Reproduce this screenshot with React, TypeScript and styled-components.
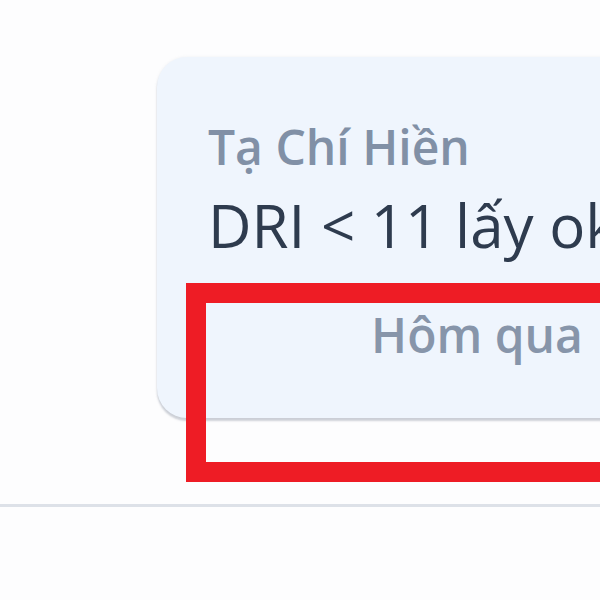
import React from "react";
import styled, { createGlobalStyle } from "styled-components";

const Global = createGlobalStyle`
  html, body { margin: 0; padding: 0; background: #fdfdfe; }
  body { font-family: "Open Sans", "Noto Sans", sans-serif; }
`;

const Page = styled.div`
  width: 600px;
  height: 600px;
  overflow: hidden;
  position: relative;
  background: #fdfdfe;
  display: flex;
  flex-direction: column;
  padding-top: 57px;
  box-sizing: border-box;
`;

const MessageRow = styled.div`
  display: flex;
  padding-left: 157px;
  height: 425px;
`;

const BubbleWrap = styled.div`
  position: relative;
  flex: 0 0 auto;
`;

const Bubble = styled.div`
  width: 640px;
  box-sizing: border-box;
  background: #eff5fd;
  border-radius: 30px;
  padding: 62px 51px 0 51px;
  height: 361px;
  box-shadow: 0 3px 2px rgba(120, 130, 145, 0.35), 0 0 3px rgba(150, 160, 175, 0.15);
  display: flex;
  flex-direction: column;
`;

const Sender = styled.div`
  font-size: 48px;
  line-height: 60px;
  color: #8190a6;
  font-weight: 600;
  white-space: nowrap;
  margin-top: -2px;
`;

const Body = styled.div`
  font-size: 60px;
  line-height: 74px;
  color: #2e3b4e;
  font-weight: 500;
  white-space: nowrap;
  margin-top: 11px;
`;

const Time = styled.div`
  font-size: 48px;
  line-height: 60px;
  color: #8795aa;
  font-weight: 600;
  text-align: center;
  margin-top: 43px;
`;

const Highlight = styled.div`
  position: absolute;
  left: 29px;
  top: 226px;
  width: 640px;
  height: 199px;
  border: 20px solid #ee1c25;
  box-sizing: border-box;
  pointer-events: none;
`;

const Divider = styled.div`
  height: 3px;
  background: #dde1e8;
  width: 100%;
  margin-top: 22px;
`;

export default function App() {
  return (
    <>
      <Global />
      <Page>
        <MessageRow>
          <BubbleWrap>
            <Bubble>
              <Sender>Tạ Chí Hiền</Sender>
              <Body>DRI &lt; 11 lấy ok</Body>
              <Time>Hôm qua</Time>
            </Bubble>
            <Highlight />
          </BubbleWrap>
        </MessageRow>
        <Divider />
      </Page>
    </>
  );
}
